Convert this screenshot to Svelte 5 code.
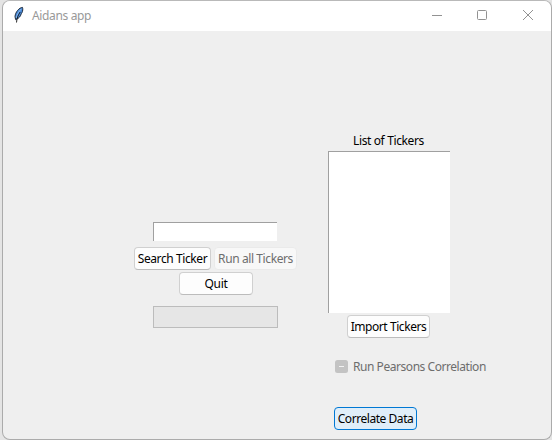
<script>
  let ticker = $state('');
</script>

<div class="desktop">
  <main class="window">
    <header>
      <svg class="feather" width="12" height="18" viewBox="0 0 12 18" aria-hidden="true">
        <path d="M9.5 1.4C6.2 1.6 2.4 6 2 10.5L2.6 13.6C6 12.7 8 9.6 8.2 7.6L9 6.8C9.8 4.8 10 3 9.5 1.4Z" fill="#4a8ad8" stroke="#1c2b3d" stroke-width="1" />
        <path d="M8.2 3C6 5.4 4.3 8 3.2 12" fill="none" stroke="#8fbcf0" stroke-width="0.9" />
        <path d="M7.2 6C5.2 9 3.8 11.8 3.5 16.5" fill="none" stroke="#111" stroke-width="0.9" />
      </svg>
      <h1>Aidans app</h1>
      <div class="controls">
        <svg width="12" height="12" viewBox="0 0 12 12" aria-label="Minimize"><path d="M2 6.5H12" /></svg>
        <svg width="12" height="12" viewBox="0 0 12 12" aria-label="Maximize"><rect x="1.5" y="1.5" width="9" height="9" rx="1" /></svg>
        <svg width="12" height="12" viewBox="0 0 12 12" aria-label="Close"><path d="M1 1L11 11M11 1L1 11" /></svg>
      </div>
    </header>
    <div class="client">
      <section class="search">
        <input type="text" bind:value={ticker} aria-label="Ticker" />
        <div class="row">
          <button class="find"><span>Search Ticker</span></button>
          <button class="all" disabled><span>Run all Tickers</span></button>
        </div>
        <button class="quit"><span>Quit</span></button>
        <div class="progress" role="progressbar" aria-label="Progress"></div>
      </section>
      <section class="tickers">
        <h2>List of Tickers</h2>
        <div class="list"></div>
        <button class="import"><span>Import Tickers</span></button>
        <div class="check">
          <svg width="13" height="13" viewBox="0 0 13 13" aria-hidden="true"><rect width="13" height="13" rx="2.5" fill="#c3c3c3" /><path d="M4 6.5H9" stroke="#f2f2f2" /></svg>
          <span>Run Pearsons Correlation</span>
        </div>
        <button class="correlate"><span>Correlate Data</span></button>
      </section>
    </div>
  </main>
</div>

<style>
  .desktop {
    box-sizing: border-box;
    width: 552px;
    height: 440px;
    padding-left: 2px;
    background: #e4e4e4;
    font-family: "Noto Sans", "Open Sans", sans-serif;
    font-size: 12px;
    line-height: 16px;
    color: #000;
    overflow: hidden;
  }
  .window {
    box-sizing: border-box;
    width: 550px;
    height: 440px;
    border: 1px solid #ababab;
    border-top-color: #b9b9b9;
    border-radius: 8px;
    background: #efefef;
    overflow: hidden;
  }
  header {
    box-sizing: border-box;
    display: flex;
    align-items: center;
    height: 30px;
    padding: 0 17px 0 10px;
    background: #fff;
  }
  .feather { margin-top: -2px; }
  h1, h2 { margin: 0; font-size: 12px; font-weight: 400; white-space: nowrap; }
  h1 { margin-left: 7px; color: #999; letter-spacing: -0.35px; }
  .controls {
    display: flex;
    gap: 34px;
    margin-left: auto;
    margin-top: -2px;
  }
  .controls svg { fill: none; stroke: #929292; stroke-width: 1; }
  .client { display: flex; height: 408px; }
  .search {
    display: flex;
    flex-direction: column;
    width: 163px;
    margin-left: 131px;
    padding-top: 191px;
  }
  input {
    box-sizing: border-box;
    width: 124px;
    height: 19px;
    margin: 0 0 6px 19px;
    padding: 1px 2px;
    border: solid #a0a0a0;
    border-width: 1px 0 0 1px;
    border-radius: 0;
    background: #fff;
    font: inherit;
    outline: none;
  }
  .row { display: flex; gap: 3px; }
  button {
    box-sizing: border-box;
    display: flex;
    align-items: center;
    justify-content: center;
    height: 23px;
    padding: 0;
    border: 1px solid #d0d0d0;
    border-bottom-color: #bcbcbc;
    border-radius: 4px;
    background: #fdfdfd;
    color: #000;
    font: inherit;
    white-space: nowrap;
  }
  .find { width: 77px; letter-spacing: -0.4px; }
  .all { width: 83px; letter-spacing: -0.4px; }
  button:disabled { border-color: #eaeaea; background: #f8f8f8; color: #6d6d6d; }
  .quit { width: 74px; margin: 2px 0 0 45px; letter-spacing: -0.25px; }
  .progress {
    box-sizing: border-box;
    width: 125px;
    height: 22px;
    margin: 11px 0 0 19px;
    border: 1px solid #bcbcbc;
    background: #e6e6e6;
  }
  .tickers {
    display: flex;
    flex-direction: column;
    margin-left: 31px;
    padding-top: 102px;
  }
  h2 { margin-left: 25px; line-height: 16px; letter-spacing: -0.37px; }
  .list {
    box-sizing: border-box;
    width: 122px;
    height: 162px;
    margin-top: 2px;
    border: solid #a0a0a0;
    border-width: 1px 0 0 1px;
    background: #fff;
  }
  .import { width: 83px; margin: 2px 0 0 19px; letter-spacing: -0.43px; }
  .check {
    display: flex;
    align-items: center;
    gap: 5px;
    height: 17px;
    margin: 20px 0 0 7px;
    color: #6d6d6d;
    white-space: nowrap;
    letter-spacing: -0.45px;
  }
  .correlate {
    width: 83px;
    margin: 32px 0 0 6px;
    border-color: #0078d4;
    background: #e0eef9;
    letter-spacing: -0.45px;
  }
</style>
